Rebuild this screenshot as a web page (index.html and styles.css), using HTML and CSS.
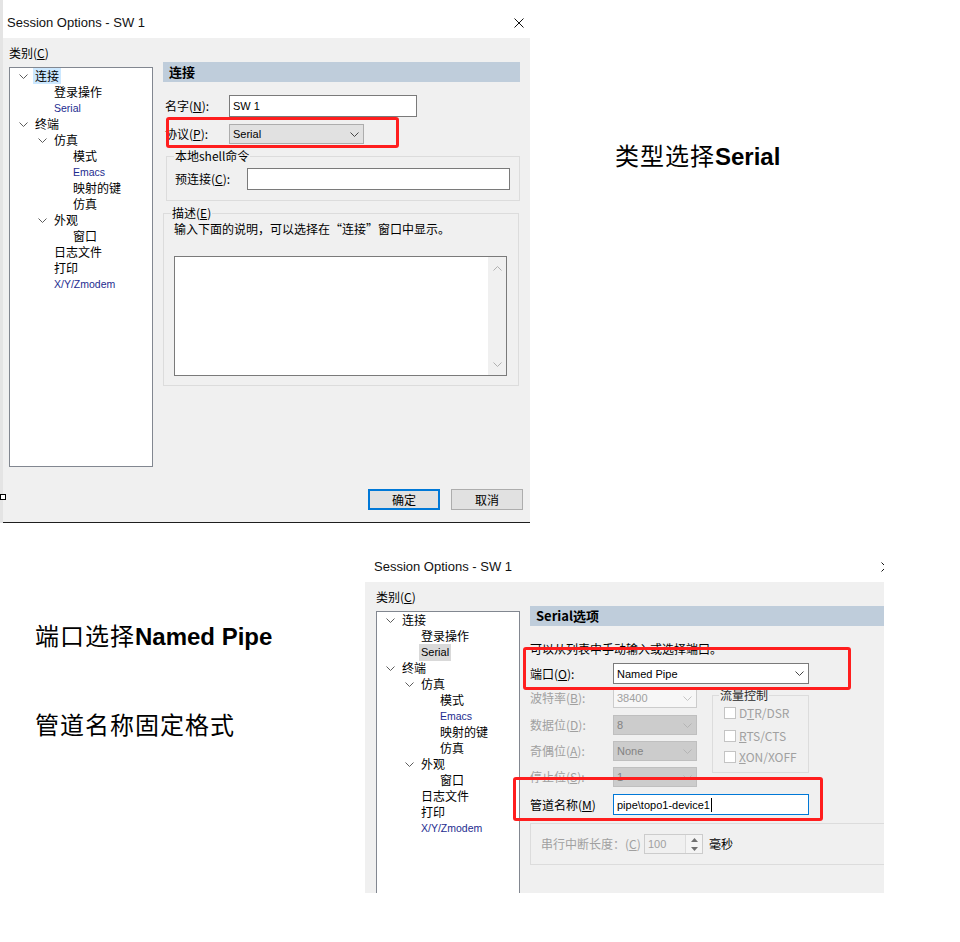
FILE: index.html
```html
<!DOCTYPE html>
<html lang="zh-CN">
<head>
    <meta charset="UTF-8">
    <title>Session Options - SW 1</title>
    <link rel="stylesheet" href="styles.css">
</head>
<body>
    <div class="row row-top">
        <div class="shot shot-a">
            <div class="dlg">
                <div class="dlg-title dlg-title--tall">
                    <span>Session Options - SW 1</span>
                    <svg class="close" width="10" height="10" viewBox="0 0 10 10"><path d="M0.5 0.5l9 9M9.5 0.5l-9 9" stroke="#111" stroke-width="1"/></svg>
                </div>
                <div class="dlg-body">
                    <div class="cat">
                        <div class="cat-label">类别(<u>C</u>)</div>
                        <ul class="tree">
                            <li class="l0"><svg class="chev" width="9" height="5" viewBox="0 0 9 5"><path d="M0.5 0.5l4 4 4-4" fill="none" stroke="#5c5c5c"/></svg><span class="sel">连接</span></li>
                            <li class="l1"><i class="slot"></i><span>登录操作</span></li>
                            <li class="l1"><i class="slot"></i><span class="en">Serial</span></li>
                            <li class="l0"><svg class="chev" width="9" height="5" viewBox="0 0 9 5"><path d="M0.5 0.5l4 4 4-4" fill="none" stroke="#5c5c5c"/></svg><span>终端</span></li>
                            <li class="l1"><svg class="chev" width="9" height="5" viewBox="0 0 9 5"><path d="M0.5 0.5l4 4 4-4" fill="none" stroke="#5c5c5c"/></svg><span>仿真</span></li>
                            <li class="l2"><i class="slot"></i><span>模式</span></li>
                            <li class="l2"><i class="slot"></i><span class="en">Emacs</span></li>
                            <li class="l2"><i class="slot"></i><span>映射的键</span></li>
                            <li class="l2"><i class="slot"></i><span>仿真</span></li>
                            <li class="l1"><svg class="chev" width="9" height="5" viewBox="0 0 9 5"><path d="M0.5 0.5l4 4 4-4" fill="none" stroke="#5c5c5c"/></svg><span>外观</span></li>
                            <li class="l2"><i class="slot"></i><span>窗口</span></li>
                            <li class="l1"><i class="slot"></i><span>日志文件</span></li>
                            <li class="l1"><i class="slot"></i><span>打印</span></li>
                            <li class="l1"><i class="slot"></i><span class="en">X/Y/Zmodem</span></li>
                        </ul>
                    </div>
                    <div class="panel">
                        <div class="panel-head">连接</div>
                        <div class="field field-name">
                            <label class="lbl-a">名字(<u>N</u>):</label>
                            <div class="input input-name">SW 1</div>
                        </div>
                        <div class="field field-proto">
                            <label class="lbl-a">协议(<u>P</u>):</label>
                            <div class="combo combo-proto">Serial<svg width="9" height="5" viewBox="0 0 9 5"><path d="M0.5 0.5l4 4 4-4" fill="none" stroke="#444"/></svg></div>
                        </div>
                        <fieldset class="group group-shell">
                            <legend>本地shell命令</legend>
                            <div class="group-in">
                                <div class="field field-pre">
                                    <label class="lbl-pre">预连接(<u>C</u>):</label>
                                    <div class="input input-pre"></div>
                                </div>
                            </div>
                        </fieldset>
                        <fieldset class="group group-desc">
                            <legend>描述(<u>E</u>)</legend>
                            <div class="desc-in">
                                <div class="desc-text">输入下面的说明，可以选择在“连接”窗口中显示。</div>
                                <div class="memo">
                                    <div class="vscroll">
                                        <svg width="9" height="5" viewBox="0 0 9 5"><path d="M0.5 4.5l4-4 4 4" fill="none" stroke="#b0b0b0"/></svg>
                                        <svg width="9" height="5" viewBox="0 0 9 5"><path d="M0.5 0.5l4 4 4-4" fill="none" stroke="#b0b0b0"/></svg>
                                    </div>
                                </div>
                            </div>
                        </fieldset>
                    </div>
                </div>
                <div class="dlg-foot">
                    <button class="btn btn-default">确定</button>
                    <button class="btn">取消</button>
                </div>
            </div>
            <div class="mark mark-a"></div>
            <div class="handle"></div>
        </div>
        <div class="note note-a"><span class="cn">类型选择</span><b>Serial</b></div>
    </div>

    <div class="row row-bottom">
        <div class="notes-b">
            <div class="note"><span class="cn">端口选择</span><b>Named Pipe</b></div>
            <div class="note note-2"><span class="cn">管道名称固定格式</span></div>
        </div>
        <div class="shot shot-b">
            <div class="dlg dlg--b">
                <div class="dlg-title">
                    <span>Session Options - SW 1</span>
                    <svg class="close" width="10" height="10" viewBox="0 0 10 10"><path d="M0.5 0.5l9 9M9.5 0.5l-9 9" stroke="#111" stroke-width="1"/></svg>
                </div>
                <div class="dlg-body">
                    <div class="cat">
                        <div class="cat-label">类别(<u>C</u>)</div>
                        <ul class="tree">
                            <li class="l0"><svg class="chev" width="9" height="5" viewBox="0 0 9 5"><path d="M0.5 0.5l4 4 4-4" fill="none" stroke="#5c5c5c"/></svg><span>连接</span></li>
                            <li class="l1"><i class="slot"></i><span>登录操作</span></li>
                            <li class="l1"><i class="slot"></i><span class="en sel sel-grey">Serial</span></li>
                            <li class="l0"><svg class="chev" width="9" height="5" viewBox="0 0 9 5"><path d="M0.5 0.5l4 4 4-4" fill="none" stroke="#5c5c5c"/></svg><span>终端</span></li>
                            <li class="l1"><svg class="chev" width="9" height="5" viewBox="0 0 9 5"><path d="M0.5 0.5l4 4 4-4" fill="none" stroke="#5c5c5c"/></svg><span>仿真</span></li>
                            <li class="l2"><i class="slot"></i><span>模式</span></li>
                            <li class="l2"><i class="slot"></i><span class="en">Emacs</span></li>
                            <li class="l2"><i class="slot"></i><span>映射的键</span></li>
                            <li class="l2"><i class="slot"></i><span>仿真</span></li>
                            <li class="l1"><svg class="chev" width="9" height="5" viewBox="0 0 9 5"><path d="M0.5 0.5l4 4 4-4" fill="none" stroke="#5c5c5c"/></svg><span>外观</span></li>
                            <li class="l2"><i class="slot"></i><span>窗口</span></li>
                            <li class="l1"><i class="slot"></i><span>日志文件</span></li>
                            <li class="l1"><i class="slot"></i><span>打印</span></li>
                            <li class="l1"><i class="slot"></i><span class="en">X/Y/Zmodem</span></li>
                        </ul>
                    </div>
                    <div class="panel">
                        <div class="panel-head">Serial选项</div>
                        <div class="info">可以从列表中手动输入或选择端口。</div>
                        <div class="field field-port">
                            <label class="lbl-b">端口(<u>O</u>):</label>
                            <div class="combo combo-port">Named Pipe<svg width="9" height="5" viewBox="0 0 9 5"><path d="M0.5 0.5l4 4 4-4" fill="none" stroke="#444"/></svg></div>
                        </div>
                        <div class="serial-grid">
                            <div class="serial-left">
                                <div class="field field-dis">
                                    <label class="lbl-b off">波特率(<u>B</u>):</label>
                                    <div class="combo combo-dis combo-light">38400<svg width="9" height="5" viewBox="0 0 9 5"><path d="M0.5 0.5l4 4 4-4" fill="none" stroke="#c4c4c4"/></svg></div>
                                </div>
                                <div class="field field-dis">
                                    <label class="lbl-b off">数据位(<u>D</u>):</label>
                                    <div class="combo combo-dis">8<svg width="9" height="5" viewBox="0 0 9 5"><path d="M0.5 0.5l4 4 4-4" fill="none" stroke="#b4b4b4"/></svg></div>
                                </div>
                                <div class="field field-dis">
                                    <label class="lbl-b off">奇偶位(<u>A</u>):</label>
                                    <div class="combo combo-dis">None<svg width="9" height="5" viewBox="0 0 9 5"><path d="M0.5 0.5l4 4 4-4" fill="none" stroke="#b4b4b4"/></svg></div>
                                </div>
                                <div class="field field-dis">
                                    <label class="lbl-b off">停止位(<u>S</u>):</label>
                                    <div class="combo combo-dis">1<svg width="9" height="5" viewBox="0 0 9 5"><path d="M0.5 0.5l4 4 4-4" fill="none" stroke="#b4b4b4"/></svg></div>
                                </div>
                            </div>
                            <fieldset class="group group-flow">
                                <legend>流量控制</legend>
                                <div class="flow-in">
                                    <div class="check"><i class="box"></i><span>D<u>T</u>R/DSR</span></div>
                                    <div class="check"><i class="box"></i><span><u>R</u>TS/CTS</span></div>
                                    <div class="check"><i class="box"></i><span><u>X</u>ON/XOFF</span></div>
                                </div>
                            </fieldset>
                        </div>
                        <div class="field field-pipe">
                            <label class="lbl-b">管道名称(<u>M</u>)</label>
                            <div class="input input-pipe">pipe\topo1-device1<i class="caret"></i></div>
                        </div>
                        <div class="group-break">
                            <span class="off break-lbl">串行中断长度：(<u>C</u>)</span>
                            <div class="spin">
                                <span>100</span>
                                <div class="spin-btns">
                                    <svg width="7" height="4" viewBox="0 0 7 4"><path d="M0 4L3.5 0 7 4z" fill="#707070"/></svg>
                                    <svg width="7" height="4" viewBox="0 0 7 4"><path d="M0 0L3.5 4 7 0z" fill="#707070"/></svg>
                                </div>
                            </div>
                            <span class="ms">毫秒</span>
                        </div>
                    </div>
                </div>
            </div>
            <div class="mark mark-b1"></div>
            <div class="mark mark-b2"></div>
        </div>
    </div>
</body>
</html>
```

FILE: styles.css
```css
* {
    box-sizing: border-box;
}
body {
    margin: 0;
    background: #fff;
    color: #000;
    font-family: "Noto Sans CJK SC", "Noto Sans", sans-serif;
    font-size: 12px;
    line-height: 16px;
}
u {
    text-decoration: underline;
    text-underline-offset: 1px;
}
.row {
    display: flex;
    align-items: flex-start;
}
.shot {
    position: relative;
}
.shot-a {
    width: 530px;
    border-left: 3px solid #e4e4e4;
}
.shot-b {
    width: 519px;
    height: 342px;
    overflow: hidden;
}
.row-bottom {
    margin-top: 28px;
}

/* dialog */
.dlg {
    width: 527px;
    background: #f0f0f0;
}
.dlg--b {
    width: 532px;
}
.dlg-title {
    height: 31px;
    background: #fff;
    display: flex;
    align-items: center;
    justify-content: space-between;
    padding: 0 6px 0 4px;
    font-family: "Liberation Sans", sans-serif;
    font-size: 13px;
    color: #111;
}
.dlg-title--tall {
    height: 38px;
    padding-top: 7px;
}
.dlg--b .dlg-title {
    padding-left: 9px;
}
.dlg-body {
    display: flex;
    gap: 10px;
    padding: 0 10px 0 6px;
}
.dlg--b .dlg-body {
    padding-left: 11px;
}
.dlg-foot {
    display: flex;
    justify-content: flex-end;
    gap: 11px;
    padding: 22px 7px 12px 0;
    border-bottom: 1px solid #1e1e1e;
}
.btn {
    width: 72px;
    height: 21px;
    padding: 0;
    background: #e1e1e1;
    border: 1px solid #adadad;
    font-family: inherit;
    font-size: 12px;
    color: #000;
}
.btn-default {
    border: 2px solid #0078d7;
}

/* category tree */
.cat {
    width: 144px;
    flex: none;
}
.cat-label {
    margin-top: 7px;
}
.tree {
    list-style: none;
    margin: 6px 0 0 0;
    padding: 0;
    height: 400px;
    background: #fff;
    border: 1px solid #828790;
}
.tree li {
    display: flex;
    align-items: center;
    height: 16px;
    white-space: nowrap;
}
.tree .l0 { padding-left: 9px; }
.tree .l1 { padding-left: 28px; }
.tree .l2 { padding-left: 47px; }
.tree .chev {
    flex: none;
    margin-right: 7px;
}
.tree .slot {
    width: 16px;
    flex: none;
}
.tree .en {
    color: #1d2c8f;
    font-family: "Liberation Sans", sans-serif;
    font-size: 10.5px;
}
.tree .sel {
    background: #cce8ff;
    padding: 0 2px;
    margin-left: -2px;
    line-height: 16px;
}
.tree .sel-grey {
    background: #d9d9d9;
    color: #000;
    font-size: 11px;
    line-height: 17px;
}

/* right panel */
.panel {
    width: 357px;
    flex: none;
}
.panel-head {
    margin-top: 24px;
    height: 20px;
    line-height: 20px;
    padding-left: 6px;
    background: #bfcddb;
    font-size: 13px;
    font-weight: bold;
}
.field {
    display: flex;
    align-items: center;
}
.lbl-a {
    width: 66px;
    padding-left: 2px;
}
.lbl-b {
    width: 83px;
}
.off {
    color: #a0a0a0;
}
.input {
    height: 22px;
    background: #fff;
    border: 1px solid #7a7a7a;
    padding-left: 3px;
    line-height: 20px;
    font-family: "Liberation Sans", sans-serif;
    font-size: 11px;
}
.combo {
    height: 20px;
    display: flex;
    align-items: center;
    justify-content: space-between;
    padding: 0 4px 0 3px;
    line-height: 18px;
    font-family: "Liberation Sans", sans-serif;
    font-size: 11px;
}
.field-name {
    margin-top: 13px;
}
.input-name {
    width: 188px;
}
.field-proto {
    margin-top: 7px;
}
.combo-proto {
    width: 135px;
    background: #e1e1e1;
    border: 1px solid #adadad;
}

/* group boxes */
.group {
    margin: 0;
    padding: 0;
    border: 1px solid #dcdcdc;
    min-width: 0;
}
.group legend {
    padding: 0 1px;
    line-height: 16px;
}
.group-shell {
    margin: 4px 0 0 3px;
    width: 354px;
}
.group-shell legend {
    margin-left: 7px;
}
.group-in {
    padding: 4px 9px 10px 8px;
}
.lbl-pre {
    width: 72px;
}
.input-pre {
    width: 263px;
}
.group-desc {
    margin-top: 4px;
    width: 356px;
}
.group-desc legend {
    margin-left: 7px;
}
.desc-in {
    padding: 0 11px 9px 10px;
}
.memo {
    margin-top: 19px;
    width: 333px;
    height: 120px;
    background: #fff;
    border: 1px solid #7a7a7a;
    display: flex;
    justify-content: flex-end;
}
.vscroll {
    width: 18px;
    background: #f0f0f0;
    display: flex;
    flex-direction: column;
    justify-content: space-between;
    align-items: center;
    padding: 9px 0 8px 0;
}

/* serial page */
.info {
    margin-top: 15px;
}
.field-port {
    margin-top: 6px;
}
.combo-port {
    width: 196px;
    height: 21px;
    background: #fff;
    border: 1px solid #7a7a7a;
}
.serial-grid {
    display: flex;
    align-items: flex-start;
    margin-top: 3px;
}
.serial-left {
    width: 167px;
    padding-top: 1px;
}
.field-dis {
    margin-top: 6px;
}
.field-dis:first-child {
    margin-top: 0;
}
.field-dis:nth-child(2) {
    margin-top: 7px;
}
.combo-dis {
    width: 84px;
    background: #cccccc;
    border: 1px solid #bfbfbf;
    color: #838383;
}
.combo-light {
    background: #f7f7f7;
    border-color: #cccccc;
    color: #a0a0a0;
}
.group-flow {
    margin-left: 15px;
    width: 97px;
}
.group-flow legend {
    margin-left: 6px;
    color: #2a2a2a;
}
.flow-in {
    padding: 2px 0 7px 11px;
}
.check {
    display: flex;
    align-items: center;
    height: 16px;
    color: #a0a0a0;
}
.check + .check {
    margin-top: 7px;
}
.check:last-child {
    margin-top: 5px;
}
.check .box {
    width: 12px;
    height: 12px;
    background: #fff;
    border: 1px solid #c4c4c4;
    margin-right: 3px;
}
.field-pipe {
    margin-top: 7px;
}
.input-pipe {
    width: 196px;
    height: 21px;
    border-color: #0078d7;
    display: flex;
    align-items: center;
}
.caret {
    width: 1px;
    height: 14px;
    background: #000;
    margin-left: 1px;
}
.group-break {
    margin-top: 8px;
    width: 357px;
    height: 42px;
    border: 1px solid #dcdcdc;
    display: flex;
    align-items: center;
    padding-left: 10px;
}
.break-lbl {
    width: 103px;
}
.spin {
    width: 59px;
    height: 20px;
    border: 1px solid #cccccc;
    background: #f0f0f0;
    display: flex;
    justify-content: space-between;
    color: #a0a0a0;
    padding-left: 3px;
    line-height: 18px;
    font-family: "Liberation Sans", sans-serif;
    font-size: 11px;
}
.spin-btns {
    width: 17px;
    display: flex;
    flex-direction: column;
    align-items: center;
    justify-content: space-around;
    border-left: 1px solid #dcdcdc;
    background: #f4f4f4;
}
.ms {
    margin-left: 6px;
}

/* annotations */
.mark {
    position: absolute;
    border: 3px solid #ff1e1e;
    border-radius: 3px;
}
.mark-a {
    left: 163px;
    top: 117px;
    width: 233px;
    height: 31px;
}
.mark-b1 {
    left: 158px;
    top: 96px;
    width: 328px;
    height: 43px;
}
.mark-b2 {
    left: 148px;
    top: 226px;
    width: 310px;
    height: 44px;
}
.handle {
    position: absolute;
    left: -3px;
    top: 494px;
    width: 6px;
    height: 6px;
    background: #fff;
    border: 1px solid #000;
}
.note {
    font-size: 24px;
    line-height: 32px;
    white-space: nowrap;
}
.note .cn {
    font-family: "Noto Sans CJK SC", sans-serif;
    letter-spacing: 1px;
}
.note b {
    font-family: "Liberation Sans", "Noto Sans", sans-serif;
    font-weight: bold;
}
.note-a {
    margin: 139px 0 0 85px;
}
.notes-b {
    width: 365px;
    padding: 68px 0 0 35px;
    flex: none;
}
.note-2 {
    margin-top: 55px;
}
```
